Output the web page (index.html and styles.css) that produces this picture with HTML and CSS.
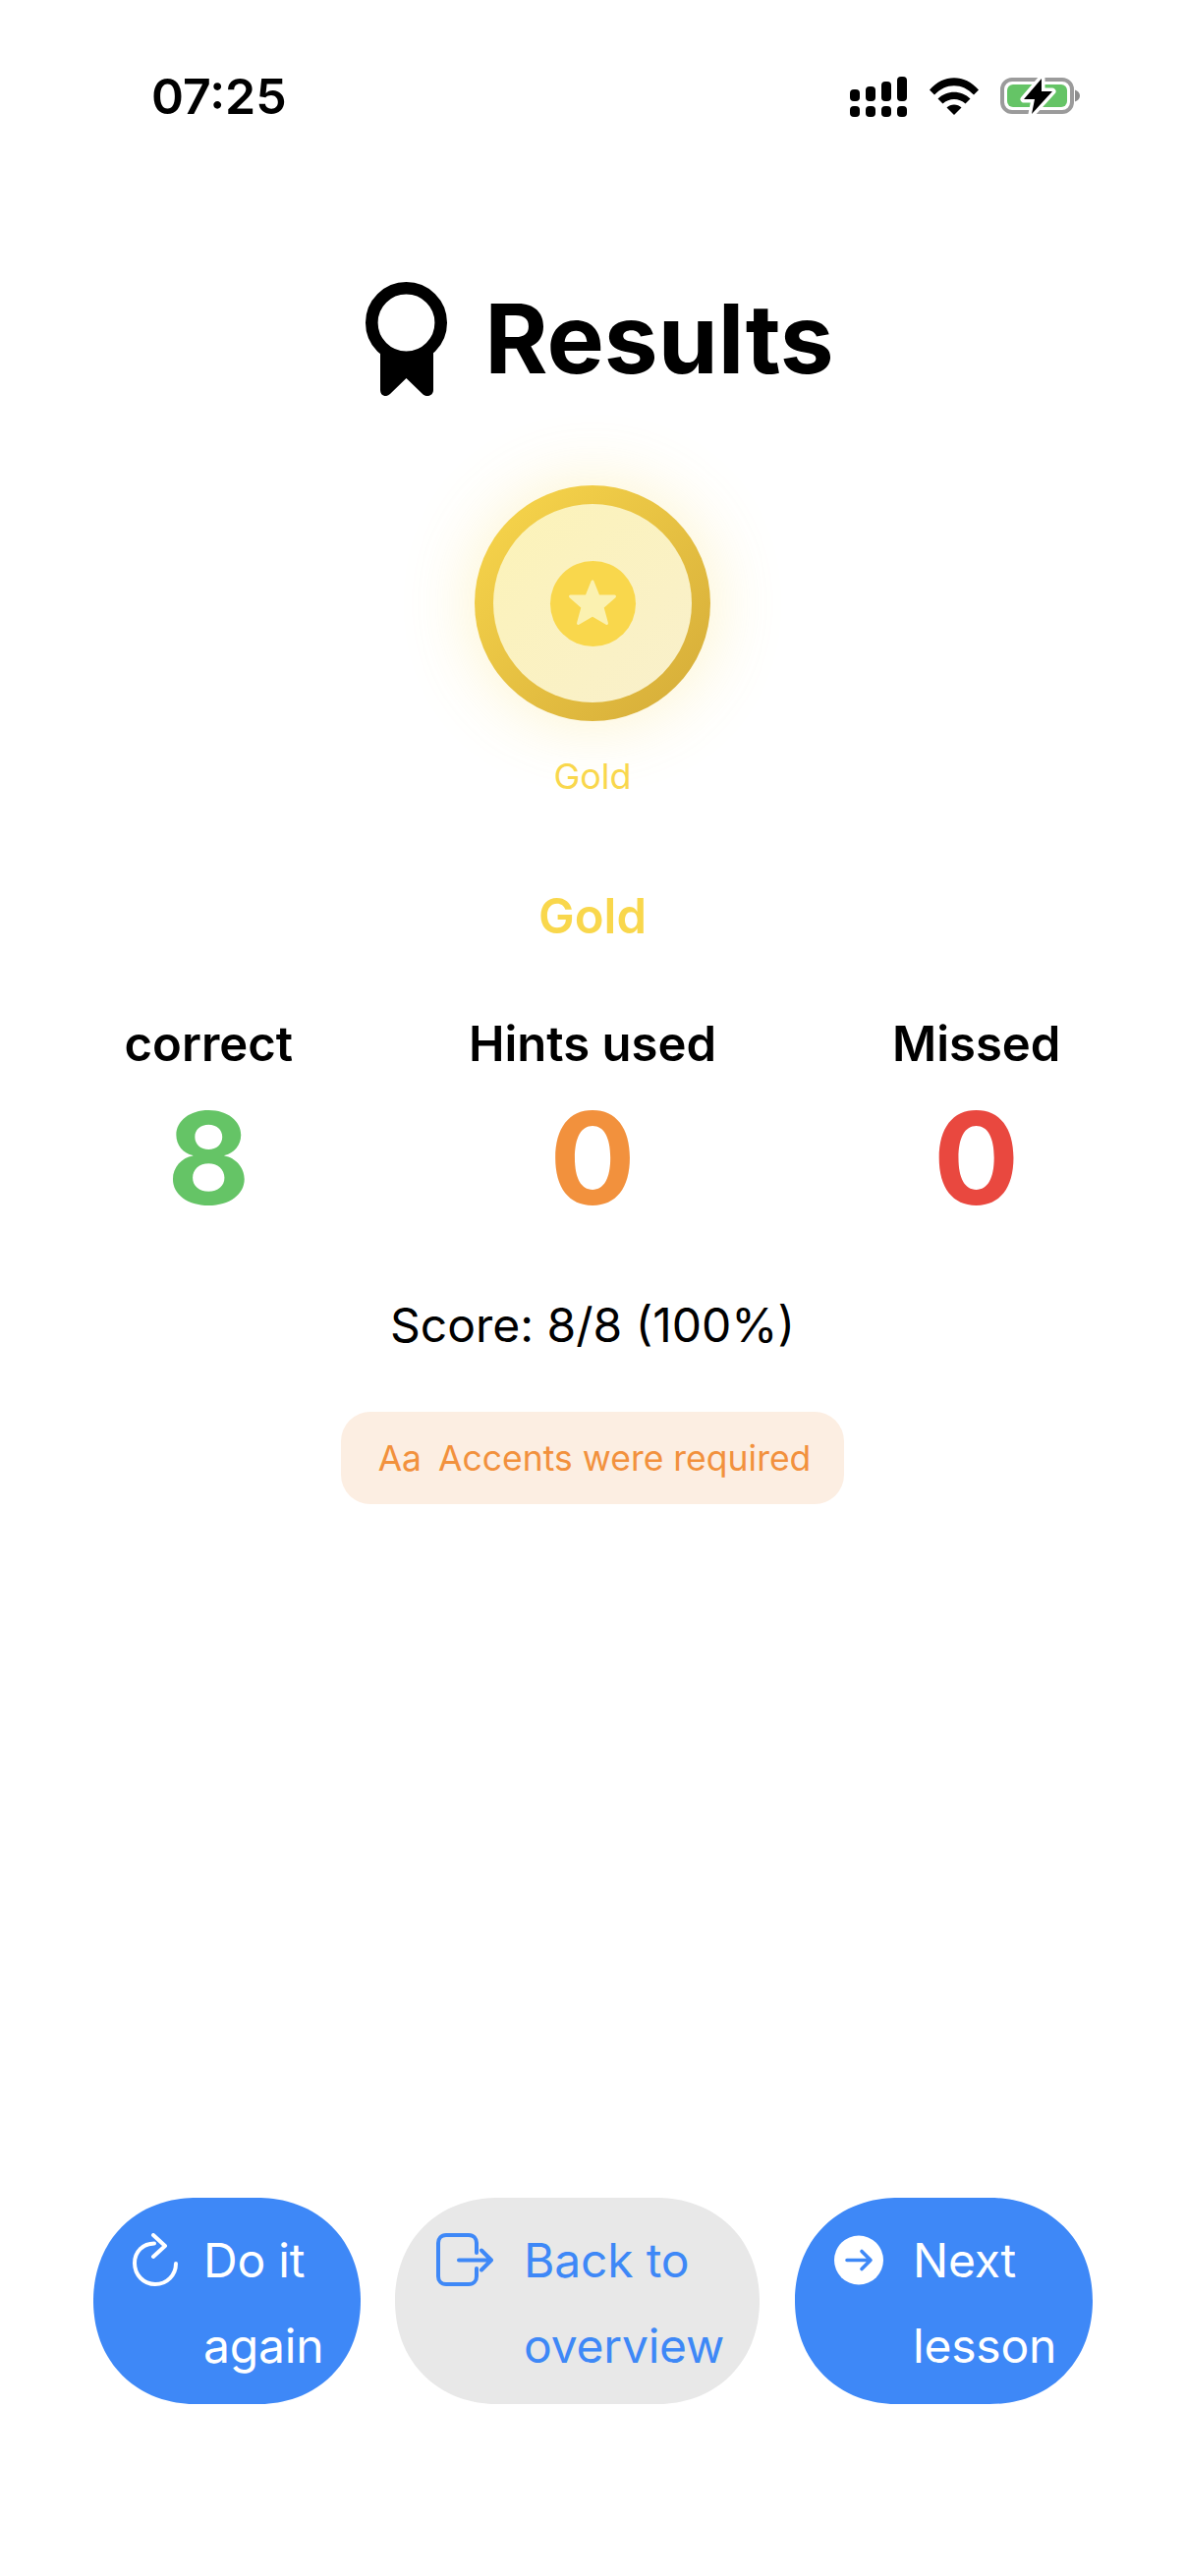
FILE: index.html
```html
<!DOCTYPE html>
<html lang="en">
<head>
    <meta charset="UTF-8">
    <meta name="viewport" content="width=device-width, initial-scale=1.0">
    <title>Results</title>
    <link rel="stylesheet" href="styles.css">
</head>
<body>
    <div class="page">
        <header class="status-bar">
            <span class="clock">07:25</span>
            <div class="status-icons">
                <svg class="icon-signal" viewBox="0 0 58 41" aria-hidden="true">
                    <rect x="0" y="13" width="10" height="12" rx="4"/>
                    <rect x="16" y="10" width="10" height="15" rx="4"/>
                    <rect x="32" y="5" width="10" height="20" rx="4"/>
                    <rect x="48" y="0" width="10" height="25" rx="4"/>
                    <rect x="0" y="30" width="10" height="11" rx="4"/>
                    <rect x="16" y="30" width="10" height="11" rx="4"/>
                    <rect x="32" y="30" width="10" height="11" rx="4"/>
                    <rect x="48" y="30" width="10" height="11" rx="4"/>
                </svg>
                <svg class="icon-wifi" viewBox="0 0 50 38" aria-hidden="true">
                    <path d="M25 38 17.500 30.500C21.500 26.500 28.500 26.500 32.500 30.500Z"/>
                    <path d="M8.500 21.500C17.500 12.500 32.500 12.500 41.500 21.500L36.500 26.500C30 20.500 20 20.500 13.500 26.500Z"/>
                    <path d="M0 12.500C14 -4 36 -4 50 12.500L45 17.500C33.500 5 16.500 5 5 17.500Z"/>
                </svg>
                <svg class="icon-battery" viewBox="0 0 81 40" aria-hidden="true">
                    <rect x="2" y="3" width="71" height="33" rx="10" fill="none" stroke="#9b9b9b" stroke-width="4"/>
                    <rect x="7" y="8" width="61" height="23" rx="6" fill="#65c466"/>
                    <path d="M76 13.500C79 14.500 81 16.500 81 19.500C81 22.500 79 24.500 76 25.500Z" fill="#8e8e8e"/>
                    <path class="bolt" d="M42 2 24 23H35L32 38 53 15H42Z"/>
                </svg>
            </div>
        </header>

        <h1 class="title">
            <svg class="icon-award" viewBox="0 0 83 116" aria-hidden="true">
                <path d="M15 70V110C15 116 21 118 25 114L41.500 98 58 114C62 118 69 116 69 110V70Z"/>
                <circle cx="41.500" cy="41.500" r="35.200" fill="#fff" stroke="#000" stroke-width="12.600"/>
            </svg>
            Results
        </h1>

        <section class="medal-block">
            <div class="medal">
                <div class="medal-face">
                    <div class="medal-center">
                        <svg class="icon-star" viewBox="0 0 50 48" aria-hidden="true">
                            <path d="M25 2 31 17H47.500L35 28 39.500 44.500 25 36 10.500 44.500 15 28 2.500 17H19Z" stroke-width="3" stroke-linejoin="round"/>
                        </svg>
                    </div>
                </div>
            </div>
            <div class="medal-label">Gold</div>
        </section>

        <div class="tier">Gold</div>

        <section class="stats">
            <div class="stat">
                <div class="stat-name">correct</div>
                <div class="stat-value stat-correct">8</div>
            </div>
            <div class="stat">
                <div class="stat-name">Hints used</div>
                <div class="stat-value stat-hints">0</div>
            </div>
            <div class="stat">
                <div class="stat-name">Missed</div>
                <div class="stat-value stat-missed">0</div>
            </div>
        </section>

        <p class="score">Score: 8/8 (100%)</p>

        <div class="notice-row">
            <div class="notice"><span>Aa</span><span>Accents were required</span></div>
        </div>

        <nav class="actions">
            <button class="action action-again" type="button">
                <svg class="action-icon" viewBox="0 0 46 54" aria-hidden="true">
                    <path d="M22 10.500C10.500 10.500 2 19 2 30.500C2 42.500 11 52 23 52C35 52 44 42.500 44 31" fill="none" stroke="#fff" stroke-width="4" stroke-linecap="round"/>
                    <path d="M21 2 33 13 21 24" fill="none" stroke="#fff" stroke-width="4" stroke-linecap="round" stroke-linejoin="round"/>
                </svg>
                <span class="action-text">Do it again</span>
            </button>
            <button class="action action-back" type="button">
                <svg class="action-icon" viewBox="0 0 58 54" aria-hidden="true">
                    <path d="M41 20V10C41 5.500 38 2 33 2H10C5 2 2 5.500 2 10V44C2 48.500 5 52 10 52H33C38 52 41 48.500 41 44V36" fill="none" stroke="#3e88f7" stroke-width="4" stroke-linecap="round"/>
                    <path d="M23 27.500H56M46 17.500 56 27.500 46 37.500" fill="none" stroke="#3e88f7" stroke-width="4" stroke-linecap="round" stroke-linejoin="round"/>
                </svg>
                <span class="action-text">Back to overview</span>
            </button>
            <button class="action action-next" type="button">
                <svg class="action-icon" viewBox="0 0 50 51" aria-hidden="true">
                    <circle cx="25" cy="25.500" r="25" fill="#fff"/>
                    <path d="M13 25.500H37M28 16.500 37 25.500 28 34.500" fill="none" stroke="#3e88f7" stroke-width="3.600" stroke-linecap="round" stroke-linejoin="round"/>
                </svg>
                <span class="action-text">Next lesson</span>
            </button>
        </nav>
    </div>
</body>
</html>
```

FILE: styles.css
```css
* {
    box-sizing: border-box;
}

body {
    margin: 0;
    padding: 0;
    background-color: #fff;
    color: #000;
    font-family: Inter, "Noto Sans", sans-serif;
}

.page {
    display: flex;
    flex-direction: column;
    height: 2622px;
    overflow: hidden;
}

/* status bar */
.status-bar {
    display: flex;
    justify-content: space-between;
    align-items: center;
    height: 78px;
    margin-top: 59px;
    padding: 0 107px 0 154px;
}

.clock {
    font-size: 50px;
    font-weight: 600;
    line-height: 78px;
}

.status-icons {
    display: flex;
    align-items: center;
    gap: 23px;
}

.icon-signal {
    width: 58px;
    height: 41px;
}

.icon-wifi {
    width: 50px;
    height: 38px;
    margin-right: -1px;
}

.icon-battery {
    width: 81px;
    height: 40px;
}

.bolt {
    stroke: #fff;
    stroke-width: 7px;
    stroke-linejoin: round;
    paint-order: stroke;
}

/* heading */
.title {
    display: flex;
    justify-content: center;
    align-items: center;
    gap: 37px;
    height: 120px;
    margin: 148px 0 0;
    padding-left: 14px;
    font-size: 98px;
    font-weight: 700;
    line-height: 120px;
}

.icon-award {
    width: 85px;
    height: 116px;
}

/* medal */
.medal-block {
    display: flex;
    flex-direction: column;
    align-items: center;
    margin-top: 89px;
}

.medal {
    width: 240px;
    height: 240px;
    padding: 19px;
    border-radius: 50%;
    background: linear-gradient(135deg, #f9d74c, #d4ab38);
    box-shadow: 0 0 72px rgba(249, 215, 76, 0.3);
}

.medal-face {
    display: flex;
    justify-content: center;
    align-items: center;
    height: 100%;
    border-radius: 50%;
    background: linear-gradient(135deg, #fcf3b8, #f9f0cc);
}

.medal-center {
    display: flex;
    justify-content: center;
    align-items: center;
    width: 87px;
    height: 87px;
    border-radius: 50%;
    background-color: #f9d74c;
}

.icon-star {
    width: 50px;
    height: 48px;
    fill: #fbf1b0;
    stroke: #fbf1b0;
}

.medal-label {
    margin-top: 34px;
    color: #f9d74c;
    font-size: 36px;
    line-height: 44px;
}

.tier {
    margin-top: 90px;
    color: #f9d74c;
    font-size: 49px;
    font-weight: 600;
    line-height: 62px;
    text-align: center;
}

/* counters */
.stats {
    display: grid;
    grid-template-columns: repeat(3, 1fr);
    margin-top: 68px;
    padding: 0 17px;
    text-align: center;
}

.stat-name {
    font-size: 49px;
    font-weight: 600;
    line-height: 62px;
}

.stat-value {
    margin-top: 11px;
    margin-bottom: -1px;
    font-size: 130px;
    font-weight: 700;
    line-height: 148px;
}

.stat-correct {
    color: #65c466;
}

.stat-hints {
    color: #f2913d;
}

.stat-missed {
    color: #e9483f;
}

.score {
    margin: 66px 0 0;
    font-size: 48px;
    line-height: 62px;
    text-align: center;
}

.notice-row {
    display: flex;
    justify-content: center;
    margin-top: 57px;
}

.notice {
    display: flex;
    align-items: center;
    gap: 17px;
    height: 94px;
    padding: 0 34px 0 38px;
    border-radius: 30px;
    background-color: #fceee2;
    color: #f2913d;
    font-size: 35.500px;
}

/* bottom buttons */
.actions {
    display: flex;
    gap: 35px;
    margin-top: auto;
    margin-bottom: 175px;
    padding: 0 94px 0 95px;
}

.action {
    display: flex;
    align-items: flex-start;
    height: 210px;
    padding: 0;
    border: none;
    border-radius: 105px;
    corner-shape: superellipse(1.08);
    background-color: #3e88f7;
    color: #fff;
    font-family: inherit;
    font-size: 48px;
    letter-spacing: -0.2px;
    line-height: 87px;
    text-align: left;
    cursor: pointer;
}

.action-back {
    background-color: #e8e8e8;
    color: #3e88f7;
}

.action-icon {
    flex: none;
    margin-top: 36px;
}

.action-text {
    margin-top: 20px;
}

.action-again {
    width: 272px;
    padding-left: 40px;
}

.action-again .action-icon {
    width: 46px;
    height: 54px;
    margin-right: 26px;
}

.action-back {
    width: 371px;
    padding-left: 42px;
}

.action-back .action-icon {
    width: 58px;
    height: 54px;
    margin-right: 31px;
}

.action-next {
    width: 303px;
    margin-left: 1px;
    padding-left: 40px;
}

.action-next .action-icon {
    width: 50px;
    height: 51px;
    margin-top: 38px;
    margin-right: 30px;
}

.action-again .action-text,
.action-next .action-text {
    width: 130px;
}
```
